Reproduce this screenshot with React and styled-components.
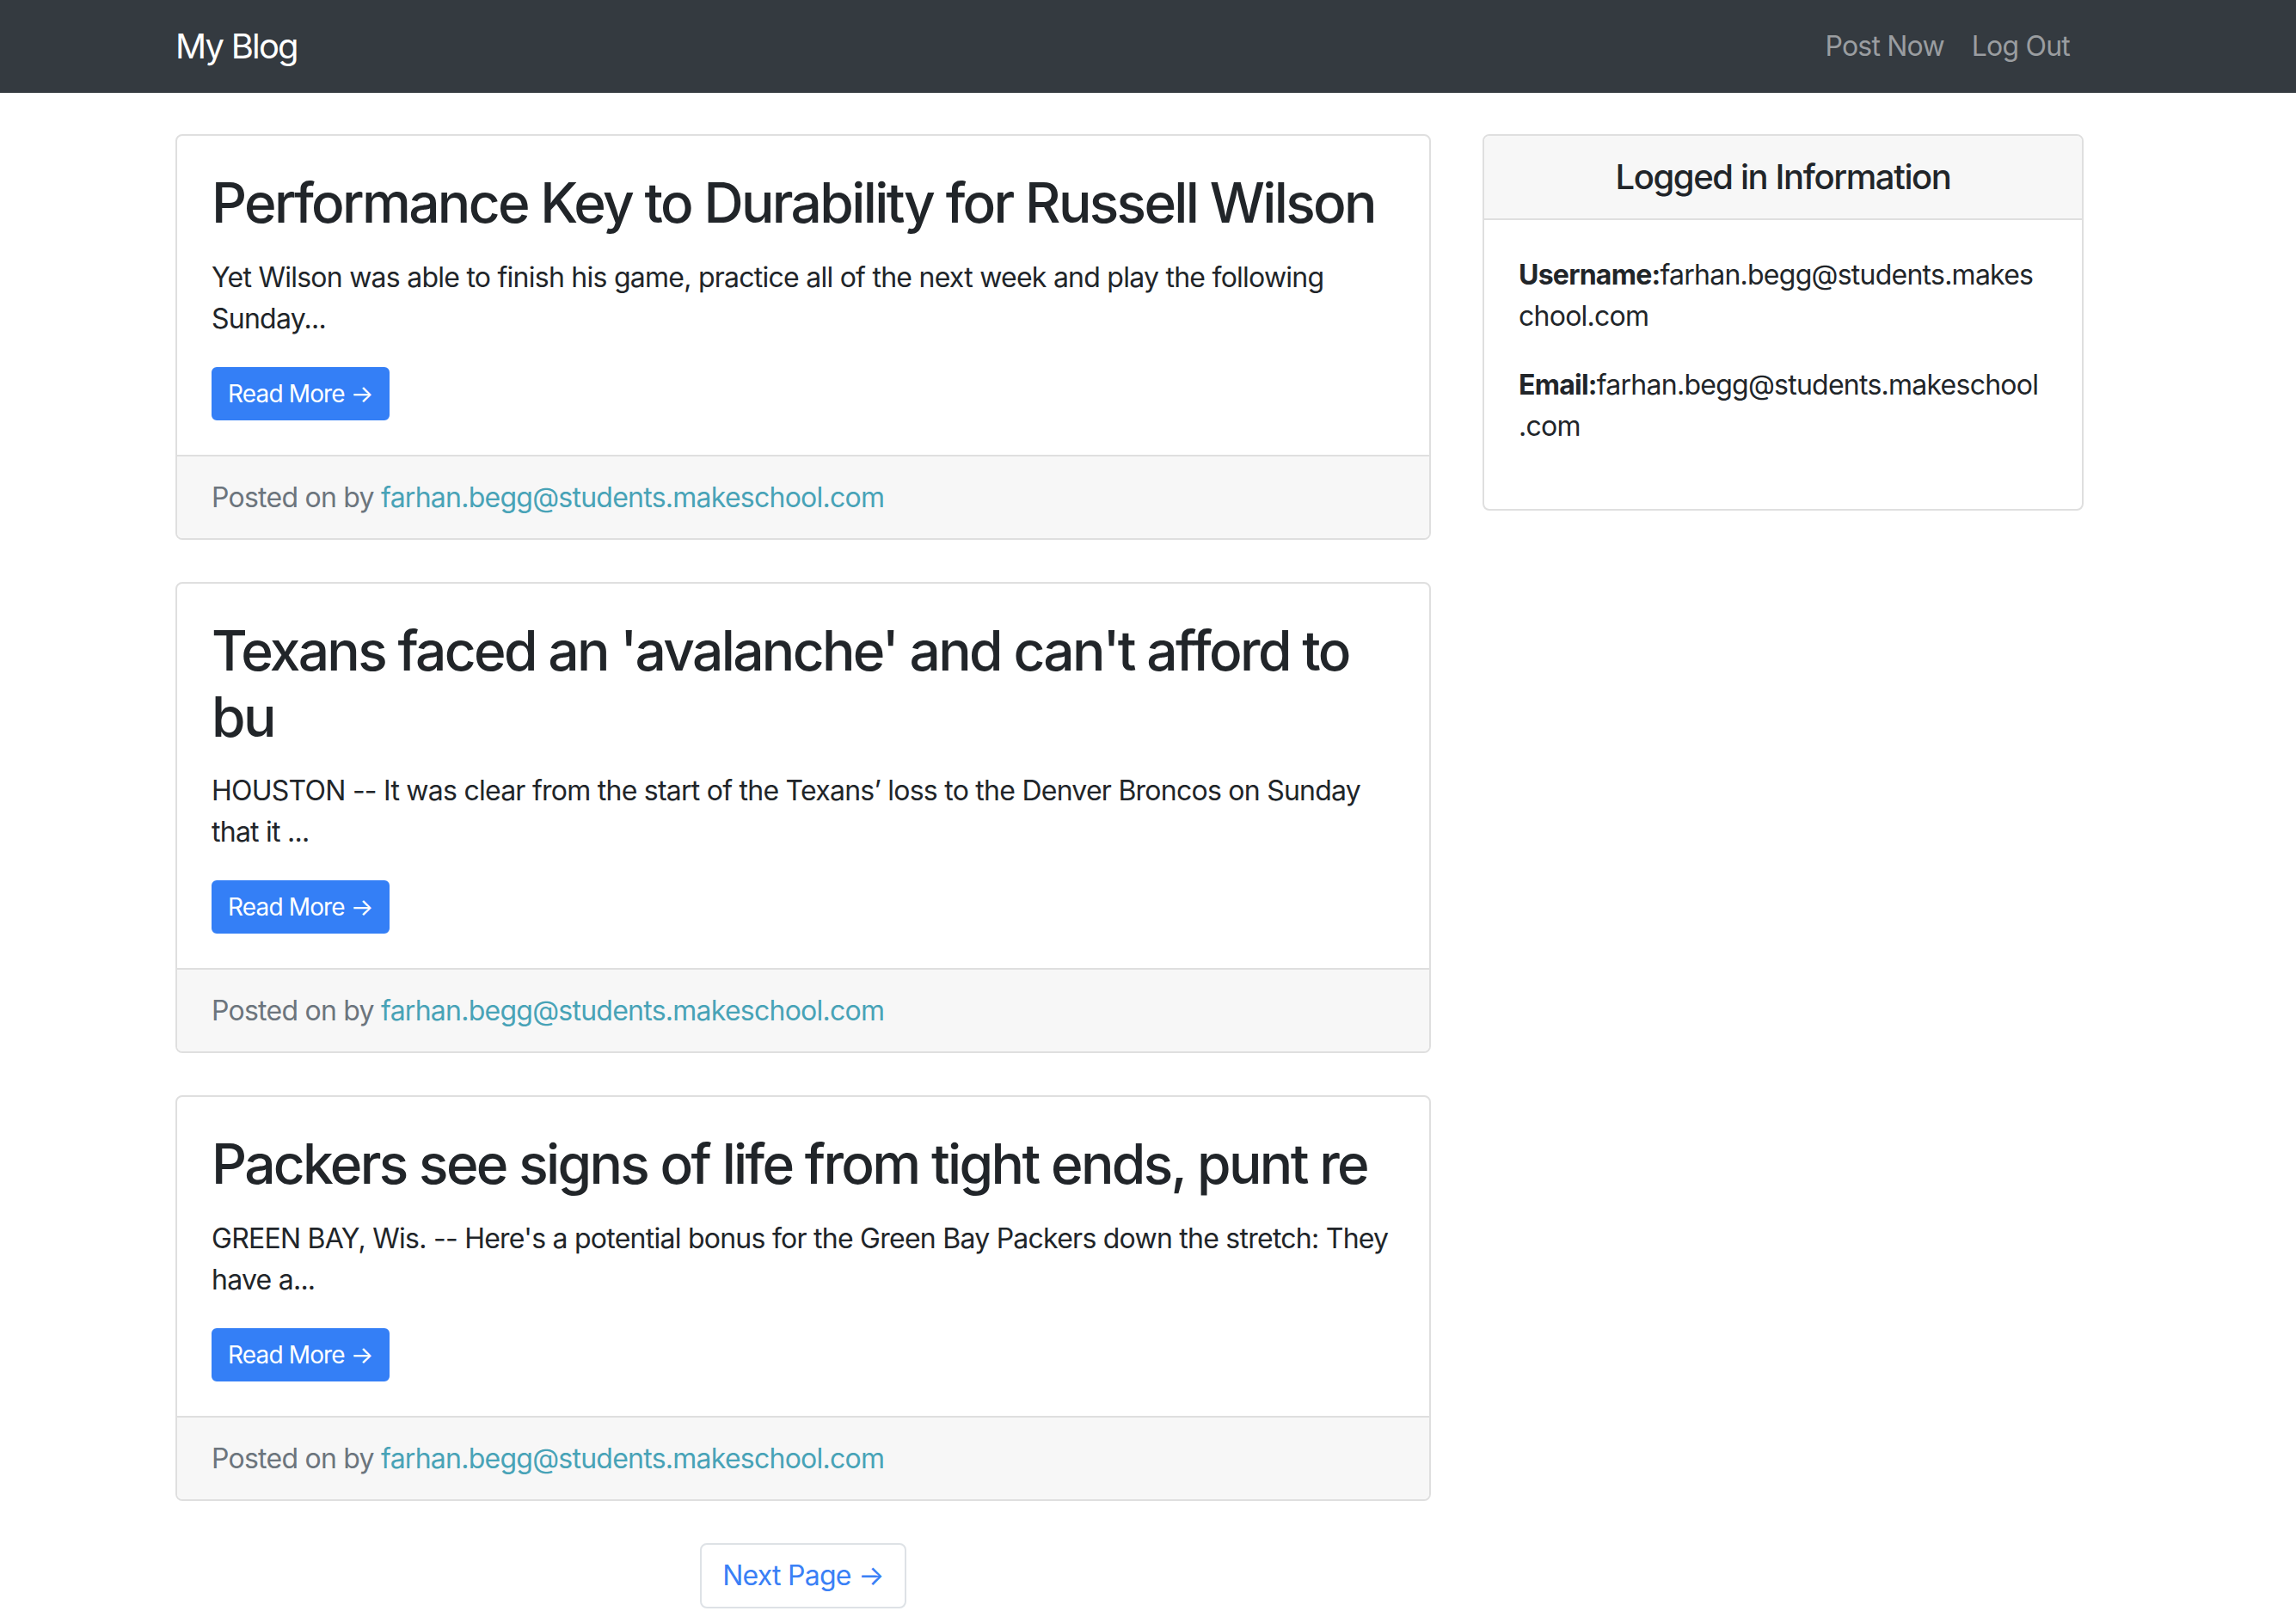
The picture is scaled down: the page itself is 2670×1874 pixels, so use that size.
import styled, { createGlobalStyle } from 'styled-components';

const GlobalStyle = createGlobalStyle`
  body {
    margin: 0;
    background: #fff;
    color: #212529;
    font-family: Inter, 'Liberation Sans', sans-serif;
    font-size: 32px;
    line-height: 48px;
    letter-spacing: -0.75px;
  }
  * {
    box-sizing: border-box;
  }
`;

const Container = styled.div`
  width: 2219px;
  margin-left: 204px;
`;

const Navbar = styled.nav`
  background: #343a40;
  height: 108px;
  display: flex;
  align-items: center;
`;

const NavInner = styled(Container)`
  display: flex;
  align-items: center;
  justify-content: space-between;
`;

const Brand = styled.a`
  color: #fff;
  font-size: 40px;
  line-height: 60px;
  letter-spacing: -1.8px;
  text-decoration: none;
`;

const NavLinks = styled.div`
  display: flex;
`;

const NavLink = styled.a`
  color: #9a9da0;
  font-size: 32px;
  line-height: 48px;
  letter-spacing: -0.8px;
  padding: 0 16px;
  text-decoration: none;
`;

const Main = styled(Container)`
  margin-top: 48px;
  display: grid;
  grid-template-columns: 1460px 699px;
  column-gap: 60px;
  align-items: start;
`;

const PostColumn = styled.div`
  display: flex;
  flex-direction: column;
`;

const Card = styled.div`
  background: #fff;
  border: 2px solid #dfdfdf;
  border-radius: 8px;
  overflow: hidden;
  margin-bottom: ${({ spaced }) => (spaced ? '49px' : '0')};
  overflow-wrap: break-word;
`;

const CardBody = styled.div`
  padding: 40px;
`;

const CardTitle = styled.h2`
  font-size: 64px;
  line-height: 76.8px;
  font-weight: 500;
  letter-spacing: -2.65px;
  margin: 0 0 24px;
`;

const CardText = styled.p`
  margin: 0 0 32px;
`;

const InfoText = styled.p`
  margin: 0 0 32px;
  max-width: 606px;
`;

const ReadMore = styled.a`
  display: inline-block;
  vertical-align: top;
  background: #347ff6;
  color: #fff;
  font-size: 28px;
  line-height: 42px;
  letter-spacing: -0.85px;
  padding: 8px 17px;
  border: 2px solid #347ff6;
  border-radius: 6px;
  text-decoration: none;
`;

const CardFooter = styled.div`
  background: #f7f7f7;
  border-top: 2px solid #dfdfdf;
  padding: 24px 40px 23px;
  color: #6c757d;
`;

const AuthorLink = styled.a`
  color: #48a3b7;
  text-decoration: none;
`;

const CardHeader = styled.div`
  background: #f7f7f7;
  border-bottom: 2px solid #dfdfdf;
  padding: 24px 40px;
`;

const HeaderTitle = styled.h5`
  margin: 0;
  font-size: 40px;
  line-height: 48px;
  font-weight: 500;
  letter-spacing: -1.4px;
  text-align: center;
`;

const Pager = styled.div`
  display: flex;
  justify-content: center;
`;

const PageLink = styled.a`
  display: inline-block;
  padding: 16px 24px;
  font-size: 32px;
  line-height: 40px;
  color: #3a80f6;
  border: 2px solid #dee2e6;
  border-radius: 8px;
  text-decoration: none;
`;

const posts = [
  {
    title: 'Performance Key to Durability for Russell Wilson',
    text: 'Yet Wilson was able to finish his game, practice all of the next week and play the following Sunday...',
  },
  {
    title: "Texans faced an 'avalanche' and can't afford to bu",
    text: 'HOUSTON -- It was clear from the start of the Texans\u2019 loss to the Denver Broncos on Sunday that it ...',
  },
  {
    title: 'Packers see signs of life from tight ends, punt re',
    text: "GREEN BAY, Wis. -- Here's a potential bonus for the Green Bay Packers down the stretch: They have a...",
  },
];

const email = 'farhan.begg@students.makeschool.com';

const App = () => {
  return (
    <>
      <GlobalStyle />
      <Navbar>
        <NavInner>
          <Brand href='#'>My Blog</Brand>
          <NavLinks>
            <NavLink href='#'>Post Now</NavLink>
            <NavLink href='#'>Log Out</NavLink>
          </NavLinks>
        </NavInner>
      </Navbar>
      <Main>
        <PostColumn>
          {posts.map((post, index) => (
            <Card spaced key={index}>
              <CardBody>
                <CardTitle>{post.title}</CardTitle>
                <CardText>{post.text}</CardText>
                <ReadMore href='#'>Read More &rarr;</ReadMore>
              </CardBody>
              <CardFooter>
                Posted on by <AuthorLink href='#'>{email}</AuthorLink>
              </CardFooter>
            </Card>
          ))}
          <Pager>
            <PageLink href='#'>Next Page &rarr;</PageLink>
          </Pager>
        </PostColumn>
        <Card>
          <CardHeader>
            <HeaderTitle>Logged in Information</HeaderTitle>
          </CardHeader>
          <CardBody>
            <InfoText>
              <strong>Username:</strong>
              {email}
            </InfoText>
            <InfoText>
              <strong>Email:</strong>
              {email}
            </InfoText>
          </CardBody>
        </Card>
      </Main>
    </>
  );
};

export default App;
